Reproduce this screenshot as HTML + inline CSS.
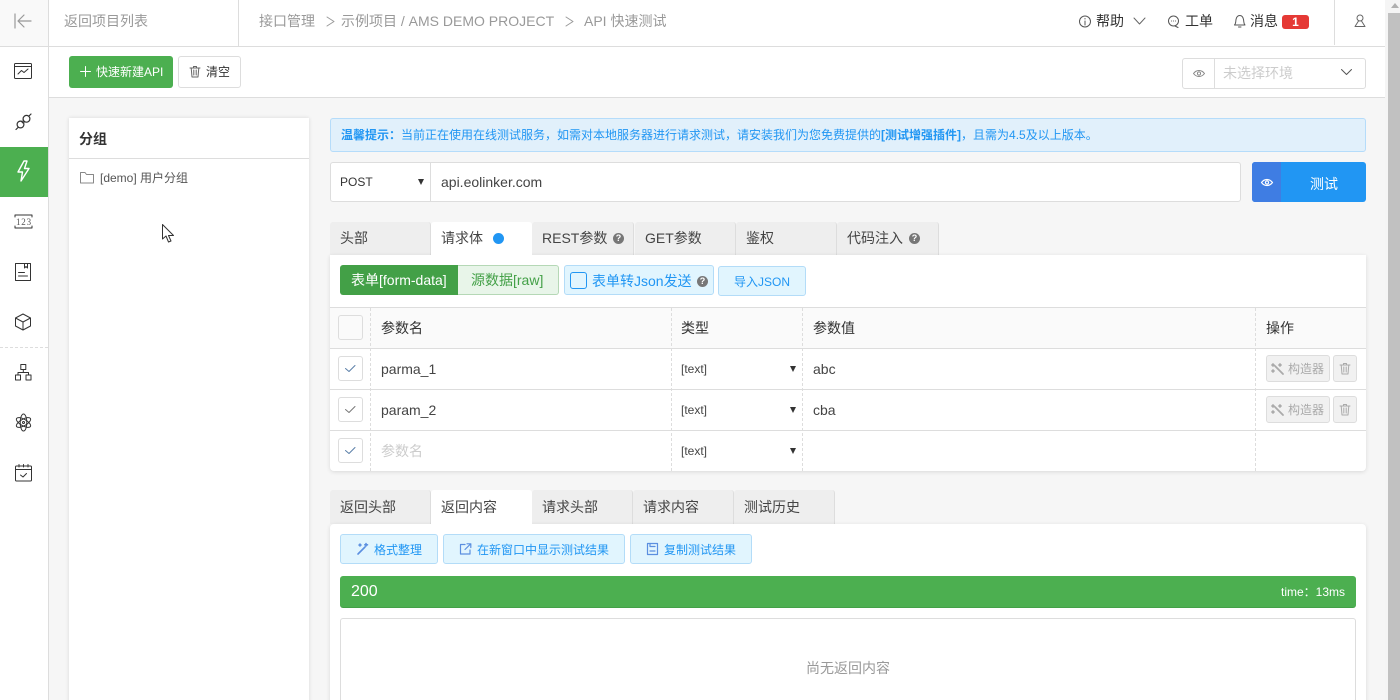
<!DOCTYPE html>
<html lang="zh"><head><meta charset="utf-8"><title>API 快速测试</title>
<style>
*{box-sizing:border-box}
html,body{margin:0;padding:0;width:1400px;height:700px;overflow:hidden;background:#f6f6f6;font-family:"Liberation Sans","Noto Sans CJK SC",sans-serif;font-size:14px;color:#333}
#w{position:relative;width:1400px;height:700px;overflow:hidden;background:#f6f6f6}
.a{position:absolute}
.t{position:absolute;white-space:nowrap;line-height:20px}
svg{position:absolute;overflow:visible;fill:none;stroke-linecap:round;stroke-linejoin:round}
.tab{position:absolute;background:#eee;border-right:1px solid #ddd;border-radius:3px 3px 0 0;line-height:33px;padding-left:10px;font-size:14px;color:#444;white-space:nowrap}
.tab.on{background:#fff;border:0;z-index:2}
.blue{position:absolute;background:#e1f5fe;border:1px solid #b3dcf8;border-radius:3px;color:#2196f3;font-size:12px;white-space:nowrap}
.cb{position:absolute;left:338px;width:25px;height:25px;border:1px solid #ddd;border-radius:3px;background:#fff}
.dash{position:absolute;width:0;border-left:1px dashed #ddd}
.hl{position:absolute;left:330px;width:1036px;height:1px;background:#ddd}
.q{position:absolute;width:11px;height:11px;border-radius:50%;background:#777;color:#fff;font-size:9px;font-weight:bold;line-height:11px;text-align:center}
.gbtn{position:absolute;left:1266px;width:64px;height:27px;background:#f1f1f1;border:1px solid #ddd;border-radius:3px;color:#aaa;font-size:12px;line-height:27px;padding-left:21px}
.gdel{position:absolute;left:1333px;width:24px;height:27px;background:#f1f1f1;border:1px solid #ddd;border-radius:3px}
.tri{position:absolute;width:0;height:0;border-left:3.5px solid transparent;border-right:3.5px solid transparent;border-top:6px solid #333}
</style></head><body><div id="w">

<!-- page chrome -->
<div class="a" style="left:0;top:0;width:1385px;height:97px;background:#fff"></div>
<div class="a" style="left:0;top:0;width:48px;height:46px;background:#f9f9f9"></div>
<div class="a" style="left:0;top:46px;width:1385px;height:1px;background:#ddd"></div>
<div class="a" style="left:48px;top:97px;width:1337px;height:1px;background:#ddd"></div>
<div class="a" style="left:0;top:47px;width:48px;height:653px;background:#fff"></div>
<div class="a" style="left:48px;top:0;width:1px;height:700px;background:#ddd"></div>
<div class="a" style="left:238px;top:0;width:1px;height:46px;background:#ddd"></div>
<div class="a" style="left:1334px;top:0;width:1px;height:45px;background:#ddd"></div>

<!-- scrollbar -->
<div class="a" style="left:1385px;top:0;width:15px;height:700px;background:#f5f5f5"></div>
<div class="a" style="left:1388px;top:13px;width:12px;height:687px;background:#c1c1c1"></div>
<div class="a" style="left:1391px;top:3px;width:0;height:0;border-left:4px solid transparent;border-right:4px solid transparent;border-bottom:5px solid #b0b0b0"></div>

<!-- header -->
<svg style="left:0;top:0" width="48" height="46" stroke="#999" stroke-width="1.2"><path d="M15 14V28M31 21H18M24 15L18 21L24 27"/></svg>
<div class="t" style="left:64px;top:11px;color:#999">返回项目列表</div>
<div class="t" style="left:259px;top:11px;color:#999">接口管理</div>
<svg style="left:326px;top:16px" width="10" height="12" stroke="#999"><path d="M1 1L8 5.500L1 10"/></svg>
<div class="t" style="left:341px;top:11px;color:#999">示例项目 / AMS DEMO PROJECT</div>
<svg style="left:565px;top:16px" width="10" height="12" stroke="#999"><path d="M1 1L8 5.500L1 10"/></svg>
<div class="t" style="left:584px;top:11px;color:#999">API 快速测试</div>

<svg style="left:1078px;top:15px" width="14" height="14" stroke="#555"><circle cx="7" cy="6.500" r="5.500"/><path d="M7 6V10M7 3.500V4"/></svg>
<div class="t" style="left:1096px;top:11px;color:#333">帮助</div>
<svg style="left:1133px;top:17px" width="14" height="9" stroke="#666"><path d="M1 1L6.500 7L12 1"/></svg>
<svg style="left:1167px;top:15px" width="14" height="14" stroke="#555"><circle cx="6.500" cy="6" r="5"/><path d="M8 11L11 12.500M4.500 6H4.600M6.500 6H6.600M8.500 6H8.600"/></svg>
<div class="t" style="left:1185px;top:11px;color:#333">工单</div>
<svg style="left:1233px;top:14px" width="14" height="14" stroke="#555"><path d="M1.500 11H12C10.500 9.500 11 8 10.500 5.500C10 3 9 1.500 6.800 1.500C4.500 1.500 3.500 3 3 5.500C2.600 8 3 9.500 1.500 11ZM5.500 13H8"/></svg>
<div class="t" style="left:1250px;top:11px;color:#333">消息</div>
<div class="a" style="left:1282px;top:15px;width:27px;height:14px;background:#e53935;border-radius:3px;color:#fff;font-size:12px;font-weight:bold;line-height:14px;text-align:center">1</div>
<svg style="left:1354px;top:14px" width="13" height="14" stroke="#666"><circle cx="6" cy="4" r="3"/><path d="M4.500 7L1 12.500H11L7.500 7"/></svg>

<!-- sidebar icons -->
<div class="a" style="left:0;top:147px;width:48px;height:50px;background:#4caf50"></div>
<div class="a" style="left:0;top:347px;width:48px;border-top:1px dashed #ddd"></div>
<svg style="left:14px;top:63px" width="18" height="16" stroke="#333"><rect x=".5" y=".5" width="17" height="15" rx="1"/><path d="M.5 3.500H17.500M4 11L7.500 7.500L10 9.500L14 6"/></svg>
<svg style="left:15px;top:113px" width="18" height="18" stroke="#333" stroke-width="1.200"><circle cx="5.500" cy="11.500" r="3.400"/><circle cx="11.500" cy="5.800" r="3.400"/><path d="M3 14.500L1 16.500M14 3L16 1M8 7L9.500 9M6.500 8.500L8 10"/></svg>
<svg style="left:16px;top:160px" width="15" height="23" stroke="#fff" stroke-width="1.400"><path d="M8 1L2 12H6.500L5 21L13 8.500H8.500L11 1Z"/></svg>
<svg style="left:14px;top:214px" width="19" height="15" stroke="#333"><path d="M1 3V1H18V3M1 12V14H18V12"/></svg>
<div class="t" style="left:16px;top:212px;font-size:9px;color:#555;font-family:'Liberation Serif',serif;letter-spacing:.8px">123</div>
<svg style="left:15px;top:263px" width="16" height="18" stroke="#333"><rect x=".5" y=".5" width="15" height="17"/><path d="M3.500 9.500H9.500M3.500 13H12.500M9.500 .5V5L11 3.500L12.500 5V.5"/></svg>
<svg style="left:15px;top:313px" width="16" height="18" stroke="#333"><path d="M8 1L15.500 5V13L8 17L.5 13V5ZM.5 5L8 9L15.500 5M8 9V17"/></svg>
<svg style="left:15px;top:364px" width="17" height="17" stroke="#333"><rect x="5.800" y=".5" width="5" height="5"/><rect x=".5" y="11" width="5" height="5"/><rect x="11" y="11" width="5" height="5"/><path d="M8.300 5.500V8.500M3 11V8.500H13.500V11"/></svg>
<svg style="left:15px;top:413px" width="17" height="19" stroke="#333"><ellipse cx="8.500" cy="9.500" rx="8" ry="3.300" transform="rotate(30 8.500 9.500)"/><ellipse cx="8.500" cy="9.500" rx="8" ry="3.300" transform="rotate(-30 8.500 9.500)"/><ellipse cx="8.500" cy="9.500" rx="3.300" ry="8.500"/><circle cx="8.500" cy="9.500" r="1"/></svg>
<svg style="left:15px;top:464px" width="17" height="18" stroke="#333"><rect x=".5" y="2" width="16" height="15" rx="1"/><path d="M.5 5.500H16.500M4 .5V3M8.500 .5V3M13 .5V3M5.500 11L8 13L11.500 9.500"/></svg>

<!-- toolbar -->
<div class="a" style="left:69px;top:56px;width:104px;height:32px;background:#4caf50;border-radius:3px"></div>
<svg style="left:80px;top:66px" width="12" height="12" stroke="#fff"><path d="M5.500 .5V10.500M.5 5.500H10.500"/></svg>
<div class="t" style="left:96px;top:62px;color:#fff;font-size:12px">快速新建API</div>
<div class="a" style="left:178px;top:56px;width:63px;height:32px;background:#fff;border:1px solid #ddd;border-radius:3px"></div>
<svg style="left:190px;top:66px" width="11" height="12" stroke="#666"><path d="M0 2H10M3.500 2V.5H6.500V2M1.200 2L2 11H8L8.800 2M3.800 4V9M6.200 4V9"/></svg>
<div class="t" style="left:206px;top:62px;color:#333;font-size:12px">清空</div>
<div class="a" style="left:1182px;top:58px;width:184px;height:31px;background:#fff;border:1px solid #ddd;border-radius:3px"></div>
<div class="a" style="left:1214px;top:59px;width:1px;height:29px;background:#ddd"></div>
<svg style="left:1193px;top:69px" width="12" height="10" stroke="#888"><path d="M.5 4.500C3.500 .5 8.500 .5 11.500 4.500C8.500 8.500 3.500 8.500 .5 4.500Z"/><circle cx="6" cy="4.500" r="1.600"/></svg>
<div class="t" style="left:1223px;top:63px;color:#ccc">未选择环境</div>
<svg style="left:1341px;top:69px" width="12" height="8" stroke="#555"><path d="M.5 .5L5.500 5.500L10.500 .5"/></svg>

<!-- group panel -->
<div class="a" style="left:69px;top:118px;width:240px;height:590px;background:#fff;box-shadow:0 0 4px rgba(0,0,0,.12)"></div>
<div class="a" style="left:69px;top:158px;width:240px;height:1px;background:#ddd"></div>
<div class="t" style="left:79px;top:129px;font-weight:bold;font-size:14px;color:#333">分组</div>
<svg style="left:80px;top:172px" width="15" height="12" stroke="#888"><path d="M.5 11V.5H5L6.500 2.500H13.500V11Z"/></svg>
<div class="t" style="left:100px;top:168px;font-size:12px;color:#555">[demo] 用户分组</div>
<svg style="left:162px;top:224px" width="14" height="19" stroke="#333"><path fill="#fff" d="M.5 .5V15L4 12L6.500 18L9 17L6.500 11.500H11.500Z"/></svg>

<!-- alert -->
<div class="a" style="left:330px;top:118px;width:1036px;height:34px;background:#e1f0fb;border:1px solid #b5dcfa;border-radius:3px"></div>
<div class="t" style="left:341px;top:125px;color:#2196f3;font-size:12px"><b>温馨提示：</b>当前正在使用在线测试服务，如需对本地服务器进行请求测试，请安装我们为您免费提供的<b>[测试增强插件]</b>，且需为4.5及以上版本。</div>

<!-- url -->
<div class="a" style="left:330px;top:162px;width:911px;height:40px;background:#fff;border:1px solid #ddd;border-radius:3px"></div>
<div class="a" style="left:430px;top:163px;width:1px;height:38px;background:#ddd"></div>
<div class="t" style="left:340px;top:172px;font-size:12px;color:#333">POST</div>
<div class="tri" style="left:418px;top:179px"></div>
<div class="t" style="left:441px;top:172px;font-size:14px;color:#444">api.eolinker.com</div>
<div class="a" style="left:1252px;top:162px;width:114px;height:40px;background:#2196f3;border-radius:3px"></div>
<div class="a" style="left:1252px;top:162px;width:29px;height:40px;background:#3f7de3;border-radius:3px 0 0 3px"></div>
<svg style="left:1261px;top:178px" width="12" height="10" stroke="#fff" stroke-width="1.200"><path d="M.5 4.500C3.500 .5 8.500 .5 11.500 4.500C8.500 8.500 3.500 8.500 .5 4.500Z"/><circle cx="6" cy="4.500" r="1.600"/></svg>
<div class="t" style="left:1310px;top:174px;color:#fff">测试</div>

<!-- request tabs -->
<div class="tab" style="left:330px;top:222px;width:101px;height:33px">头部</div>
<div class="tab on" style="left:431px;top:222px;width:101px;height:33px">请求体</div>
<div class="a" style="left:493px;top:233px;width:11px;height:11px;border-radius:50%;background:#2196f3;z-index:3"></div>
<div class="tab" style="left:532px;top:222px;width:102px;height:33px">REST参数</div>
<div class="q" style="left:613px;top:233px">?</div>
<div class="tab" style="left:635px;top:222px;width:101px;height:33px">GET参数</div>
<div class="tab" style="left:736px;top:222px;width:101px;height:33px">鉴权</div>
<div class="tab" style="left:837px;top:222px;width:102px;height:33px">代码注入</div>
<div class="q" style="left:909px;top:233px;z-index:2">?</div>

<!-- request panel -->
<div class="a" style="left:330px;top:255px;width:1036px;height:216px;background:#fff;border-radius:0 0 4px 4px;box-shadow:0 1px 4px rgba(0,0,0,.12)"></div>
<div class="a" style="left:340px;top:265px;width:118px;height:30px;background:#43a047;border-radius:3px 0 0 3px;color:#fff;line-height:30px;padding-left:11px;white-space:nowrap">表单[form-data]</div>
<div class="a" style="left:458px;top:265px;width:101px;height:30px;background:#e8f5e9;border:1px solid #b5d8b6;border-left:0;border-radius:0 3px 3px 0;color:#43a047;line-height:29px;padding-left:13px;white-space:nowrap">源数据[raw]</div>
<div class="blue" style="left:564px;top:265px;width:150px;height:30px;font-size:14px;line-height:30px;padding-left:27px">表单转Json发送</div>
<div class="a" style="left:570px;top:272px;width:17px;height:17px;border:1px solid #2196f3;border-radius:3px"></div>
<div class="q" style="left:697px;top:276px">?</div>
<div class="blue" style="left:718px;top:266px;width:88px;height:30px;line-height:30px;text-align:center">导入JSON</div>

<!-- table -->
<div class="a" style="left:330px;top:307px;width:1036px;height:41px;background:#fafafa"></div>
<div class="hl" style="top:307px"></div><div class="hl" style="top:348px"></div><div class="hl" style="top:389px"></div><div class="hl" style="top:430px"></div>
<div class="dash" style="left:370px;top:308px;height:163px"></div>
<div class="dash" style="left:671px;top:308px;height:163px"></div>
<div class="dash" style="left:802px;top:308px;height:163px"></div>
<div class="dash" style="left:1255px;top:308px;height:163px"></div>
<div class="cb" style="top:315px;background:#fafafa"></div>
<div class="cb" style="top:356px"></div><div class="cb" style="top:397px"></div><div class="cb" style="top:438px"></div>
<svg style="left:345px;top:365px" width="11" height="8" stroke="#5a7fa8"><path d="M.5 3.500L4 6.500L10 .5"/></svg>
<svg style="left:345px;top:406px" width="11" height="8" stroke="#777"><path d="M.5 3.500L4 6.500L10 .5"/></svg>
<svg style="left:345px;top:447px" width="11" height="8" stroke="#5a7fa8"><path d="M.5 3.500L4 6.500L10 .5"/></svg>
<div class="t" style="left:381px;top:318px">参数名</div>
<div class="t" style="left:681px;top:318px">类型</div>
<div class="t" style="left:813px;top:318px">参数值</div>
<div class="t" style="left:1266px;top:318px">操作</div>
<div class="t" style="left:381px;top:359px;color:#444">parma_1</div>
<div class="t" style="left:381px;top:400px;color:#444">param_2</div>
<div class="t" style="left:381px;top:441px;color:#ccc">参数名</div>
<div class="t" style="left:681px;top:359px;font-size:12px;color:#444">[text]</div>
<div class="t" style="left:681px;top:400px;font-size:12px;color:#444">[text]</div>
<div class="t" style="left:681px;top:441px;font-size:12px;color:#444">[text]</div>
<div class="tri" style="left:790px;top:366px"></div><div class="tri" style="left:790px;top:407px"></div><div class="tri" style="left:790px;top:448px"></div>
<div class="t" style="left:813px;top:359px;color:#444">abc</div>
<div class="t" style="left:813px;top:400px;color:#444">cba</div>
<div class="gbtn" style="top:355px">构造器</div><div class="gdel" style="top:355px"></div>
<div class="gbtn" style="top:396px">构造器</div><div class="gdel" style="top:396px"></div>
<svg style="left:1272px;top:363px" width="12" height="12" stroke="#aaa" stroke-width="1.800"><path d="M3 3L11 11M1 1V3M0 2H2M8 1V3M7 2H9M1 7V9M0 8H2"/></svg>
<svg style="left:1272px;top:404px" width="12" height="12" stroke="#aaa" stroke-width="1.800"><path d="M3 3L11 11M1 1V3M0 2H2M8 1V3M7 2H9M1 7V9M0 8H2"/></svg>
<svg style="left:1340px;top:363px" width="11" height="12" stroke="#aaa"><path d="M0 2H10M3.500 2V.5H6.500V2M1.200 2L2 11H8L8.800 2M3.800 4V9M6.200 4V9"/></svg>
<svg style="left:1340px;top:404px" width="11" height="12" stroke="#aaa"><path d="M0 2H10M3.500 2V.5H6.500V2M1.200 2L2 11H8L8.800 2M3.800 4V9M6.200 4V9"/></svg>

<!-- response tabs -->
<div class="tab" style="left:330px;top:490px;width:101px;height:34px;line-height:34px">返回头部</div>
<div class="tab on" style="left:431px;top:490px;width:101px;height:34px;line-height:34px">返回内容</div>
<div class="tab" style="left:532px;top:490px;width:101px;height:34px;line-height:34px">请求头部</div>
<div class="tab" style="left:633px;top:490px;width:101px;height:34px;line-height:34px">请求内容</div>
<div class="tab" style="left:734px;top:490px;width:101px;height:34px;line-height:34px">测试历史</div>

<!-- response panel -->
<div class="a" style="left:330px;top:524px;width:1036px;height:190px;background:#fff;border-radius:4px;box-shadow:0 1px 4px rgba(0,0,0,.12)"></div>
<div class="blue" style="left:340px;top:534px;width:98px;height:30px;line-height:30px;padding-left:33px">格式整理</div>
<div class="blue" style="left:443px;top:534px;width:182px;height:30px;line-height:30px;padding-left:33px">在新窗口中显示测试结果</div>
<div class="blue" style="left:630px;top:534px;width:122px;height:30px;line-height:30px;padding-left:33px">复制测试结果</div>
<svg style="left:357px;top:543px" width="12" height="12" stroke="#5b8fe0" stroke-width="1.600"><path d="M1 11L8 4M9 .5V3M7.800 1.800H10.500M3 1V3M2 2H4"/></svg>
<svg style="left:460px;top:543px" width="12" height="12" stroke="#5b8fe0" stroke-width="1.200"><path d="M5 1.500H.5V11H10V7M5 6.500L10.500 1M7 .8H10.800V4.500"/></svg>
<svg style="left:647px;top:543px" width="11" height="12" stroke="#5b8fe0" stroke-width="1.200"><rect x=".5" y=".5" width="10" height="11"/><path d="M3 3.500V.5M3 3.500H8M3 8H8"/></svg>
<div class="a" style="left:340px;top:576px;width:1016px;height:32px;background:#4caf50;border-bottom:1px solid #43a047;border-radius:3px"></div>
<div class="t" style="left:351px;top:582px;font-size:16px;color:#fff">200</div>
<div class="t" style="left:1281px;top:582px;font-size:12px;color:#fff">time：13ms</div>
<div class="a" style="left:340px;top:618px;width:1016px;height:90px;background:#fff;border:1px solid #ddd;border-radius:3px"></div>
<div class="t" style="left:806px;top:658px;color:#999">尚无返回内容</div>

</div></body></html>
